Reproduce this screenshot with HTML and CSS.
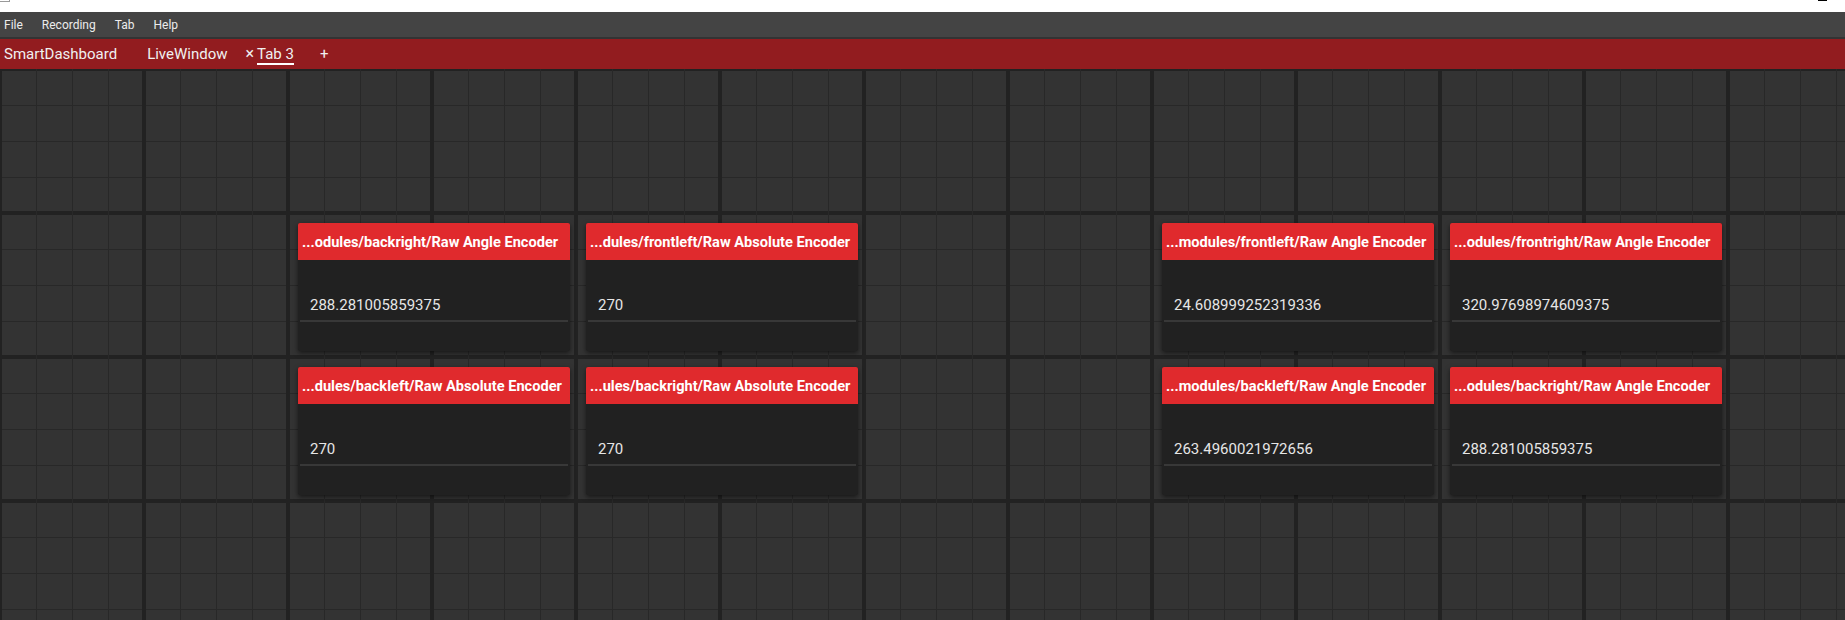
FILE: index.html
```html
<!DOCTYPE html>
<html>
<head>
<meta charset="utf-8">
<title>SmartDashboard</title>
<link rel="stylesheet" href="styles.css">
</head>
<body>
<div class="app">
  <div class="titlebar">
    <div class="app-icon"></div>
    <div class="title-text">SmartDashboard</div>
    <div class="win-btn"></div>
  </div>
  <div class="menubar">
    <span class="menu-item">File</span>
    <span class="menu-item">Recording</span>
    <span class="menu-item">Tab</span>
    <span class="menu-item">Help</span>
  </div>
  <div class="tabbar">
    <div class="tab tab-first"><span class="tab-label">SmartDashboard</span></div>
    <div class="tab"><span class="tab-label">LiveWindow</span></div>
    <div class="tab tab-selected"><span class="tab-close">×</span><span class="tab-label">Tab 3</span></div>
    <div class="tab tab-add"><span class="tab-label">+</span></div>
  </div>
  <div class="canvas">
    <div class="widget r2 c3">
      <div class="card">
        <div class="card-title">...odules/backright/Raw Angle Encoder</div>
        <div class="card-body"><div class="field">288.281005859375</div></div>
      </div>
    </div>
    <div class="widget r2 c5">
      <div class="card">
        <div class="card-title">...dules/frontleft/Raw Absolute Encoder</div>
        <div class="card-body"><div class="field">270</div></div>
      </div>
    </div>
    <div class="widget r2 c9">
      <div class="card">
        <div class="card-title">...modules/frontleft/Raw Angle Encoder</div>
        <div class="card-body"><div class="field">24.608999252319336</div></div>
      </div>
    </div>
    <div class="widget r2 c11">
      <div class="card">
        <div class="card-title">...odules/frontright/Raw Angle Encoder</div>
        <div class="card-body"><div class="field">320.97698974609375</div></div>
      </div>
    </div>
    <div class="widget r3 c3">
      <div class="card">
        <div class="card-title">...dules/backleft/Raw Absolute Encoder</div>
        <div class="card-body"><div class="field">270</div></div>
      </div>
    </div>
    <div class="widget r3 c5">
      <div class="card">
        <div class="card-title">...ules/backright/Raw Absolute Encoder</div>
        <div class="card-body"><div class="field">270</div></div>
      </div>
    </div>
    <div class="widget r3 c9">
      <div class="card">
        <div class="card-title">...modules/backleft/Raw Angle Encoder</div>
        <div class="card-body"><div class="field">263.4960021972656</div></div>
      </div>
    </div>
    <div class="widget r3 c11">
      <div class="card">
        <div class="card-title">...odules/backright/Raw Angle Encoder</div>
        <div class="card-body"><div class="field">288.281005859375</div></div>
      </div>
    </div>
  </div>
</div>
</body>
</html>
```

FILE: styles.css
```css
html, body {
  margin: 0;
  padding: 0;
  width: 1845px;
  height: 620px;
  overflow: hidden;
  background: #222;
}

.app {
  display: flex;
  flex-direction: column;
  width: 1845px;
  height: 620px;
  overflow: hidden;
  font-family: Roboto, "Liberation Sans", sans-serif;
}

/* ---------- window title bar (mostly cut off) ---------- */
.titlebar {
  height: 12px;
  background: #fff;
  display: flex;
  align-items: flex-start;
  overflow: hidden;
  flex: none;
}
.app-icon {
  width: 10px;
  height: 2px;
  border-bottom: 1px solid #9a9a9a;
  border-right: 1px solid #9a9a9a;
  box-sizing: border-box;
}
.title-text {
  margin-left: 7px;
  margin-top: -10px;
  font-family: "Noto Sans", sans-serif;
  font-size: 12px;
  line-height: 12px;
  color: #111;
}
.win-btn {
  margin-left: auto;
  margin-right: 18px;
  width: 9px;
  height: 1px;
  background: #000;
}

/* ---------- menu bar ---------- */
.menubar {
  height: 25px;
  background: #444;
  display: flex;
  align-items: center;
  gap: 19px;
  padding-left: 4px;
  border-bottom: 2px solid #333;
  flex: none;
}
.menu-item {
  color: #ececec;
  font-size: 12px;
  line-height: 16px;
}

/* ---------- tab bar ---------- */
.tabbar {
  height: 30px;
  box-sizing: border-box;
  padding-top: 2px;
  background: #921c1f;
  display: flex;
  align-items: center;
  flex: none;
}
.tab {
  display: flex;
  align-items: center;
  padding: 0 15px;
  color: #f0f0f0;
  font-size: 15px;
}
.tab-first {
  padding-left: 4px;
}
.tab-selected {
  padding-left: 3px;
  padding-right: 13px;
}
.tab-add {
  padding-left: 13px;
}
.tab-label {
  display: block;
  line-height: 18px;
  border-bottom: 2px solid transparent;
}
.tab-selected .tab-label {
  border-bottom-color: #fff;
}
.tab-close {
  display: block;
  line-height: 18px;
  padding-bottom: 2px;
  margin-right: 3px;
  font-size: 16px;
}

/* ---------- dashboard canvas ---------- */
.canvas {
  flex: none;
  display: grid;
  grid-template-columns: repeat(13, 140px);
  grid-template-rows: repeat(4, 140px);
  gap: 4px;
  padding: 2px;
  background-color: #333;
  background-image:
    linear-gradient(to right,
      transparent 34px, #282828 34px 35px,
      transparent 35px 70px, #282828 70px 71px,
      transparent 71px 106px, #282828 106px 107px,
      transparent 107px 140px, #222 140px 144px),
    linear-gradient(to bottom,
      transparent 34px, #282828 34px 35px,
      transparent 35px 70px, #282828 70px 71px,
      transparent 71px 106px, #282828 106px 107px,
      transparent 107px 140px, #222 140px 144px);
  background-size: 144px 144px;
  background-position: 2px 2px;
  width: 1870px;
  height: 576px;
}
.widget {
  grid-column-end: span 2;
  padding: 8px 4px 4px 8px;
  display: flex;
  min-width: 0;
}
.r2 { grid-row: 2; }
.r3 { grid-row: 3; }
.c3 { grid-column-start: 3; }
.c5 { grid-column-start: 5; }
.c9 { grid-column-start: 9; }
.c11 { grid-column-start: 11; }

.card {
  flex: 1;
  min-width: 0;
  display: flex;
  flex-direction: column;
  background: #212121;
  border-radius: 2px;
  box-shadow: 0 2px 5px rgba(0, 0, 0, 0.55);
  overflow: hidden;
}
.card-title {
  height: 37px;
  flex: none;
  background: #e02a2d;
  color: #fff;
  font-weight: bold;
  font-size: 14.6px;
  line-height: 38px;
  padding-left: 4px;
  white-space: nowrap;
  overflow: hidden;
}
.card-body {
  flex: 1;
  padding-top: 36px;
}
.field {
  margin: 0 2px;
  padding: 0 10px 6px;
  border-bottom: 2px solid #383838;
  color: #e6e6e6;
  font-size: 15px;
  line-height: 18px;
  white-space: nowrap;
}
```
